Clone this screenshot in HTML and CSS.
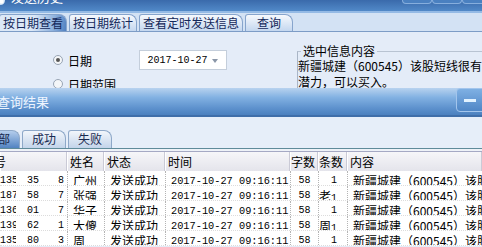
FILE: index.html
```html
<!DOCTYPE html>
<html lang="zh-CN">
<head>
    <meta charset="UTF-8">
    <title>发送历史</title>
    <link rel="stylesheet" href="styles.css">
</head>
<body>

    <div class="titlebar">
        <span class="app-icon"></span>
        <span class="title">发送历史</span>
        <div class="caption-btns"><span></span><span></span><span></span></div>
    </div>

    <div class="tabstrip">
        <div class="tab active">按日期查看</div>
        <div class="tab">按日期统计</div>
        <div class="tab">查看定时发送信息</div>
        <div class="tab roomy">查询</div>
    </div>

    <div class="filter">
        <div class="radios">
            <div class="radio checked"><span class="dot"></span>日期</div>
            <div class="radio"><span class="dot"></span>日期范围</div>
        </div>
        <div class="datebox">2017-10-27<span class="arrow"></span></div>
        <div class="groupbox">
            <div class="legend">选中信息内容</div>
            <p>新疆城建（600545）该股短线很有<br>潜力，可以买入。</p>
        </div>
    </div>

    <div class="panel-head">
        <span class="panel-title">查询结果</span>
        <span class="min-btn"></span>
    </div>

    <div class="result-tabs">
        <div class="rtab active">全部</div>
        <div class="rtab">成功</div>
        <div class="rtab">失败</div>
    </div>
    <div class="rule"></div>

    <div class="grid">
        <div class="grid-head">
            <div class="h lead"><span>号</span></div>
            <div class="h c-name">姓名</div>
            <div class="h c-state">状态</div>
            <div class="h c-time">时间</div>
            <div class="h c-len">字数</div>
            <div class="h c-cnt">条数</div>
            <div class="h c-text">内容</div>
        </div>

        <div class="row">
            <div class="c c-phone">1359</div><div class="c c-no">35</div><div class="c c-id">8</div>
            <div class="c c-name">广州</div><div class="c c-state">发送成功</div>
            <div class="c c-time">2017-10-27 09:16:11</div>
            <div class="c c-len">58</div><div class="c c-cnt">1</div>
            <div class="c c-text">新疆城建（600545）该股短线很有潜力</div>
        </div>
        <div class="row">
            <div class="c c-phone">1871</div><div class="c c-no">58</div><div class="c c-id">7</div>
            <div class="c c-name">张强</div><div class="c c-state">发送成功</div>
            <div class="c c-time">2017-10-27 09:16:11</div>
            <div class="c c-len">58</div><div class="c c-cnt"><span class="mark">老</span>1</div>
            <div class="c c-text">新疆城建（600545）该股短线很有潜力</div>
        </div>
        <div class="row">
            <div class="c c-phone">1368</div><div class="c c-no">01</div><div class="c c-id">7</div>
            <div class="c c-name">华子</div><div class="c c-state">发送成功</div>
            <div class="c c-time">2017-10-27 09:16:11</div>
            <div class="c c-len">58</div><div class="c c-cnt">1</div>
            <div class="c c-text">新疆城建（600545）该股短线很有潜力</div>
        </div>
        <div class="row">
            <div class="c c-phone">1392</div><div class="c c-no">62</div><div class="c c-id">1</div>
            <div class="c c-name">大傻</div><div class="c c-state">发送成功</div>
            <div class="c c-time">2017-10-27 09:16:11</div>
            <div class="c c-len">58</div><div class="c c-cnt"><span class="mark">周</span>1</div>
            <div class="c c-text">新疆城建（600545）该股短线很有潜力</div>
        </div>
        <div class="row">
            <div class="c c-phone">1351</div><div class="c c-no">80</div><div class="c c-id">3</div>
            <div class="c c-name">周</div><div class="c c-state">发送成功</div>
            <div class="c c-time">2017-10-27 09:16:11</div>
            <div class="c c-len">58</div><div class="c c-cnt">1</div>
            <div class="c c-text">新疆城建（600545）该股短线很有潜力</div>
        </div>
    </div>

</body>
</html>
```

FILE: styles.css
```css
body {
    margin: 0;
    width: 482px;
    height: 247px;
    overflow: hidden;
    font-family: "Noto Sans CJK SC", sans-serif;
    font-size: 12px;
    color: #000;
    background-color: #e4ecf8;
}

/* window title, mostly scrolled off the top */
.titlebar {
    height: 11px;
    display: flex;
    overflow: hidden;
    background: linear-gradient(#3a6aab, #5189c8);
    border-bottom: 2px solid #94bae5;
}

.app-icon {
    width: 9px;
    height: 9px;
    margin: -4px 0 0 -4px;
    border-radius: 50%;
    background: radial-gradient(circle at 60% 60%, #ffffff 20%, #9cc3ec 60%, #2c5b9c);
}

.title {
    margin: -10px 0 0 6px;
    line-height: 14px;
    font-size: 13px;
    color: #fff;
}

.caption-btns {
    margin-left: auto;
    display: flex;
    margin-right: -10px;
}

.caption-btns span {
    width: 28px;
    height: 3px;
    border: 1px solid #86aedd;
    border-top: none;
    border-radius: 0 0 5px 5px;
    background-color: #4a80c0;
}

/* top tabs */
.tabstrip {
    height: 18px;
    display: flex;
    align-items: flex-end;
    gap: 2px;
    margin-left: -1px;
    background-color: #d3e2f4;
    border-bottom: 1px solid #7d9cc6;
}

.tab {
    height: 17px;
    box-sizing: border-box;
    padding: 0 3px;
    line-height: 15px;
    color: #14285a;
    border: 1px solid #86a4cc;
    border-bottom: none;
    border-radius: 3px 8px 0 0;
    background: linear-gradient(#f6f9fd, #c4d7ef);
}

.tab.active {
    background: linear-gradient(100deg, #dce8f7 50%, #8fb2de 80%, #4f80c1);
}

.tab.roomy {
    padding: 0 11px;
}

/* filter area */
.filter {
    height: 56px;
    display: flex;
    overflow: hidden;
}

.radios {
    width: 88px;
    padding: 16px 0 0 53px;
}

.radio {
    height: 24px;
    display: flex;
    align-items: center;
    gap: 5px;
    white-space: nowrap;
}

.radio .dot {
    width: 8px;
    height: 8px;
    border: 1px solid #98a4b4;
    border-radius: 50%;
    background-color: #f4f6f8;
    display: flex;
    align-items: center;
    justify-content: center;
}

.radio.checked .dot::after {
    content: "";
    width: 4px;
    height: 4px;
    border-radius: 50%;
    background-color: #555;
}

.datebox {
    margin-top: 18px;
    width: 89px;
    height: 20px;
    box-sizing: border-box;
    padding-left: 7px;
    display: flex;
    align-items: center;
    font-family: "Liberation Mono", monospace;
    font-size: 10px;
    border: 1px solid #c4cedb;
    background-color: #fff;
}

.datebox .arrow {
    margin: 1px 8px 0 auto;
    border-top: 4px solid #8a96a8;
    border-left: 3px solid transparent;
    border-right: 3px solid transparent;
}

.groupbox {
    flex: 1;
    margin: 19px 0 0 70px;
    border-left: 1px solid #a9b5c6;
    border-top: 1px solid #b8c3d2;
}

.legend {
    width: max-content;
    margin: -8px 0 0 3px;
    padding: 0 2px;
    line-height: 14px;
    background-color: #e4ecf8;
}

.groupbox p {
    margin: 0;
    line-height: 16px;
    white-space: nowrap;
}

/* result panel */
.panel-head {
    height: 27px;
    display: flex;
    align-items: center;
    justify-content: space-between;
    border-bottom: 2px solid #3f6ea9;
    background: linear-gradient(#b8d2ef, #82b1e2 35%, #5d91cd 75%, #4b80bf);
}

.panel-title {
    margin-left: -3px;
    font-size: 13px;
    color: #eef5ff;
}

.min-btn {
    align-self: flex-start;
    width: 28px;
    height: 22px;
    margin-right: -4px;
    border: 1px solid #a3c5ec;
    border-radius: 4px;
    background: linear-gradient(#7fb0e3, #4f86c6);
    display: flex;
    align-items: center;
    justify-content: center;
}

.min-btn::after {
    content: "";
    width: 12px;
    height: 3px;
    margin-right: 3px;
    background-color: #e2f2ff;
}

.result-tabs {
    padding-top: 13px;
    display: flex;
    align-items: flex-end;
    gap: 2px;
    margin-left: -24px;
    background-color: #e6eef9;
}

.rtab {
    width: 44px;
    height: 18px;
    box-sizing: border-box;
    text-align: center;
    line-height: 16px;
    color: #1a2a50;
    border: 1px solid #8ea8c8;
    border-bottom: none;
    border-radius: 3px 8px 0 0;
    background: linear-gradient(#f2f6fb, #c3d4ea);
}

.rtab.active {
    background: linear-gradient(#b4cdec, #5283c2);
}

.rule {
    height: 2px;
    border-top: 1px solid #5f8b9a;
    border-bottom: 1px solid #a5a9c4;
    background-color: #eef2f8;
}

/* grid */
.grid {
    background-color: #fff;
}

.grid-head {
    height: 19px;
    display: flex;
    background: linear-gradient(#f6f6f9, #e4e4eb);
}

.h {
    box-sizing: border-box;
    padding-left: 3px;
    line-height: 19px;
    border-right: 1px solid #cacad6;
    box-shadow: inset 1px 0 #fff;
    white-space: nowrap;
    overflow: hidden;
}

.h.lead {
    width: 67px;
    padding-left: 0;
}

.h.lead span {
    margin-left: -6px;
}

.h.c-len,
.h.c-cnt {
    padding-left: 1px;
}

.row {
    height: 15px;
    display: flex;
    border-bottom: 1px dotted #dcdcdc;
    box-sizing: border-box;
}

.c {
    box-sizing: border-box;
    padding-top: 4px;
    line-height: 12px;
    white-space: nowrap;
    overflow: hidden;
}

.c-phone {
    width: 16px;
    font-family: "Liberation Mono", monospace;
    font-size: 10px;
}

.c-no {
    width: 24px;
    padding-left: 11px;
    padding-right: 6px;
    font-family: "Liberation Mono", monospace;
    font-size: 10px;
}

.c-id {
    width: 27px;
    padding-right: 3px;
    text-align: right;
    font-family: "Liberation Mono", monospace;
    font-size: 10px;
}

.c-name { width: 37px; }
.c-state { width: 61px; }
.c-time { width: 125px; }
.c-len { width: 28px; }
.c-cnt { width: 29px; }
.c-text { flex: 1; }

.c.c-name,
.c.c-state,
.c.c-time,
.c.c-len,
.c.c-cnt,
.c.c-text {
    padding-left: 5px;
    border-left: 1px dotted #b4b4b4;
}

.c.c-time {
    font-family: "Liberation Mono", monospace;
    font-size: 10.3px;
}

.c.c-len {
    padding-left: 0;
    text-align: center;
    font-family: "Liberation Mono", monospace;
    font-size: 10px;
}

.c.c-cnt {
    padding-left: 0;
    padding-right: 10px;
    text-align: right;
    font-family: "Liberation Mono", monospace;
    font-size: 10px;
}

.mark {
    font-family: "Noto Sans CJK SC", sans-serif;
    font-size: 12px;
}
```
